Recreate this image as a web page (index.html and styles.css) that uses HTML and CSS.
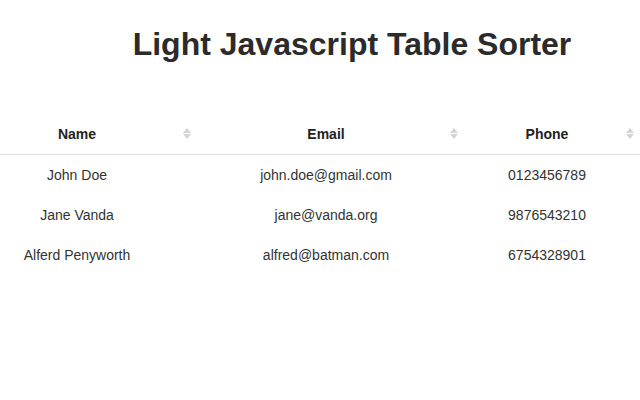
FILE: index.html
```html
<!DOCTYPE html>
<html>
<head>
<meta charset="utf-8">
<link rel="stylesheet" href="styles.css">
</head>
<body>
<header class="hero"><h1 class="title">Light Javascript Table Sorter</h1></header>
<table class="sorter">
  <colgroup><col class="c1"><col class="c2"><col class="c3"></colgroup>
  <thead>
    <tr>
      <th class="k1">Name<span class="sort"></span></th>
      <th class="k2">Email<span class="sort"></span></th>
      <th class="k3">Phone<span class="sort"></span></th>
    </tr>
  </thead>
  <tbody>
    <tr><td class="k1">John Doe</td><td class="k2">john.doe@gmail.com</td><td class="k3">0123456789</td></tr>
    <tr><td class="k1">Jane Vanda</td><td class="k2">jane@vanda.org</td><td class="k3">9876543210</td></tr>
    <tr><td class="k1">Alferd Penyworth</td><td class="k2">alfred@batman.com</td><td class="k3">6754328901</td></tr>
  </tbody>
</table>
</body>
</html>
```
FILE: styles.css
```css
html, body { margin: 0; padding: 0; background: #fff; }
body { font-family: "Liberation Sans", Arial, sans-serif; color: #333; width: 640px; overflow: hidden; }
.hero { padding: 24px 0 0 64px; height: 115px; box-sizing: border-box; text-align: center; }
.title { margin: 0; font-size: 32px; line-height: 40px; font-weight: bold; color: #2b2b2b; }
.sorter { border-collapse: collapse; table-layout: fixed; width: 640px; }
.c1 { width: 197px; }
.c2 { width: 267px; }
.c3 { width: 176px; }
th { position: relative; font-size: 14px; font-weight: bold; color: #222; height: 38px; padding: 0 0 1px; border-bottom: 1px solid #ddd; text-align: center; }
td { font-size: 14px; color: #333; height: 40px; padding: 0; text-align: center; }
.k1 { padding-right: 43px; }
.k2 { padding-right: 9px; }
.k3 { padding-right: 10px; }
th .sort { position: absolute; right: 6px; top: 13px; width: 8px; height: 11px; }
th .sort::before, th .sort::after { content: ""; position: absolute; left: 0; border-left: 4px solid transparent; border-right: 4px solid transparent; }
th .sort::before { top: 0; border-bottom: 5px solid #d4d4d4; }
th .sort::after { bottom: 0; border-top: 5px solid #d4d4d4; }
```
